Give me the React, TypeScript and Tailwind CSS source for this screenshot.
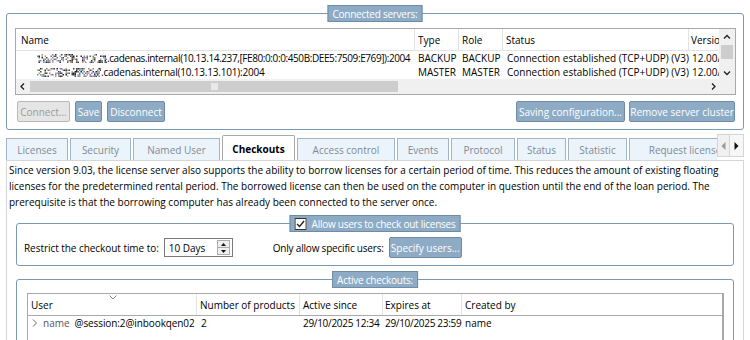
import React from "react";

function Noise({ w, seed }: { w: number; seed: number }) {
  let s = seed;
  const rnd = () => {
    s = (s * 1103515245 + 12345) & 0x7fffffff;
    return s / 0x7fffffff;
  };
  const colors = ["#333", "#555", "#777", "#999", "#c070a0", "#60a060", "#6080d0", "#444", "#aaa", "#d09050", "#222"];
  const rects: React.ReactNode[] = [];
  for (let x = 0; x < w; x += 1.5) {
    for (let y = 2; y < 11; y += 1.5) {
      if (rnd() < 0.45) {
        rects.push(<rect key={x + "-" + y} x={x} y={y} width={1.5} height={1.5} fill={colors[Math.floor(rnd() * colors.length)]} />);
      }
    }
  }
  return (
    <svg width={w} height={12} className="shrink-0">
      {rects}
    </svg>
  );
}

function Btn({ children, disabled, className = "" }: { children: React.ReactNode; disabled?: boolean; className?: string }) {
  return (
    <div
      className={
        "h-[21px] flex items-center justify-center rounded-[2px] border px-[3px] whitespace-nowrap " +
        (disabled
          ? "bg-[#e5e5e5] border-[#b8b8b8] text-[#9a9a9a] "
          : "bg-[#8eabc6] border-[#6f8ca7] text-white ") +
        className
      }
    >
      {children}
    </div>
  );
}

function Group({ title, className = "", children }: { title: React.ReactNode; className?: string; children: React.ReactNode }) {
  return (
    <div className={"relative border border-[#7c99b3] rounded-[3px] " + className}>
      <div className="absolute left-1/2 -translate-x-1/2 -top-[9px] h-[17px] flex items-center bg-[#8eabc6] border border-[#6f8ca7] text-white px-[4px] whitespace-nowrap tracking-[-0.25px]">
        {title}
      </div>
      {children}
    </div>
  );
}

function Tab({ label, w, active }: { label: string; w: number; active?: boolean }) {
  if (active) {
    return (
      <div
        className="h-[26px] shrink-0 flex items-center justify-center bg-white border border-b-0 border-[#a8a8a8] rounded-t-[2px] font-bold text-black -mb-px relative z-10"
        style={{ width: w }}
      >
        {label}
      </div>
    );
  }
  return (
    <div
      className="h-[22px] shrink-0 flex items-center justify-center bg-[#ecf4fb] border border-b-0 border-[#9fb4c6] text-[#7d8a96] whitespace-nowrap overflow-hidden"
      style={{ width: w }}
    >
      {label}
    </div>
  );
}

export default function App() {
  return (
    <div className="w-[750px] h-[340px] bg-white overflow-hidden text-[10px] leading-[14px] text-black font-['Open_Sans',sans-serif] pt-[13px]">
      {/* Connected servers */}
      <Group title="Connected servers:" className="ml-[6px] w-[738px] h-[117px] pt-[14px] pl-[8px]">
        <div className="w-[721px] h-[67px] border border-[#a9a9a9] bg-white relative overflow-hidden">
          <div className="flex h-[22px] border-b border-[#e3e3e3] items-center">
            <div className="w-[399px] pl-[5px] border-r border-[#e3e3e3] h-full flex items-center">Name</div>
            <div className="w-[44px] pl-[3px] border-r border-[#e3e3e3] h-full flex items-center">Type</div>
            <div className="w-[44px] pl-[3px] border-r border-[#e3e3e3] h-full flex items-center">Role</div>
            <div className="w-[186px] pl-[3px] border-r border-[#e3e3e3] h-full flex items-center">Status</div>
            <div className="w-[32px] pl-[2px] h-full flex items-center overflow-hidden whitespace-nowrap">Version</div>
          </div>
          <div className="flex h-[14px] items-center whitespace-nowrap">
            <div className="w-[399px] pl-[21px] flex items-center overflow-hidden">
              <Noise w={70} seed={7} />
              <span className="tracking-[-0.4px]">.cadenas.internal(10.13.14.237,[FE80:0:0:0:450B:DEE5:7509:E769]):2004</span>
            </div>
            <div className="w-[44px] pl-[3px]">BACKUP</div>
            <div className="w-[44px] pl-[3px]">BACKUP</div>
            <div className="w-[186px] pl-[4px]">Connection established (TCP+UDP) (V3)</div>
            <div className="w-[32px] pl-[3px] overflow-hidden">12.00/</div>
          </div>
          <div className="flex h-[14px] items-center whitespace-nowrap">
            <div className="w-[399px] pl-[21px] flex items-center overflow-hidden">
              <Noise w={64} seed={91} />
              <span className="tracking-[-0.2px]">.cadenas.internal(10.13.13.101):2004</span>
            </div>
            <div className="w-[44px] pl-[3px]">MASTER</div>
            <div className="w-[44px] pl-[3px]">MASTER</div>
            <div className="w-[186px] pl-[4px]">Connection established (TCP+UDP) (V3)</div>
            <div className="w-[32px] pl-[3px] overflow-hidden">12.00/</div>
          </div>
          {/* vertical scrollbar */}
          <div className="absolute right-0 top-0 w-[16px] h-[51px] bg-[#f0f0f0] flex flex-col items-center">
            <svg width="16" height="16" viewBox="0 0 16 16"><path d="M5 9.5 L8 6.5 L11 9.5" stroke="#222" strokeWidth="1.3" fill="none" /></svg>
            <div className="w-[12px] h-[14px] bg-[#cdcdcd]" />
            <div className="flex-1" />
            <svg width="16" height="14" viewBox="0 0 16 14"><path d="M5 5.5 L8 8.5 L11 5.5" stroke="#222" strokeWidth="1.3" fill="none" /></svg>
          </div>
          {/* horizontal scrollbar */}
          <div className="absolute left-0 bottom-0 w-[704px] h-[15px] bg-[#f0f0f0] flex items-center">
            <svg width="14" height="15" viewBox="0 0 14 15"><path d="M8 4.5 L5 7.5 L8 10.5" stroke="#222" strokeWidth="1.3" fill="none" /></svg>
            <div className="w-[368px] h-[11px] bg-[#cdcdcd] flex items-center justify-center">
              <div className="w-[7px] h-[7px] bg-[#e8e8e8]" />
            </div>
            <div className="flex-1" />
            <svg width="14" height="15" viewBox="0 0 14 15"><path d="M6 4.5 L9 7.5 L6 10.5" stroke="#222" strokeWidth="1.3" fill="none" /></svg>
          </div>
          <div className="absolute right-0 bottom-0 w-[16px] h-[15px] bg-[#f0f0f0]" />
        </div>
        <div className="flex mt-[6px] pl-[2px] pr-[8px]">
          <Btn disabled className="w-[53px]">Connect...</Btn>
          <Btn className="w-[27px] ml-[5px]">Save</Btn>
          <Btn className="w-[58px] ml-[5px]">Disconnect</Btn>
          <div className="flex-1" />
          <Btn className="w-[109px]">Saving configuration...</Btn>
          <Btn className="w-[106px] ml-[4px]">Remove server cluster</Btn>
        </div>
      </Group>

      {/* Tabs */}
      <div className="flex items-end mt-[4px] ml-[6px] h-[26px]">
        <div className="flex items-end gap-[2px] w-[711px] overflow-hidden h-[26px]">
          <Tab label="Licenses" w={62} />
          <Tab label="Security" w={61} />
          <Tab label="Named User" w={87} />
          <Tab label="Checkouts" w={73} active />
          <Tab label="Access control" w={98} />
          <Tab label="Events" w={52} />
          <Tab label="Protocol" w={64} />
          <Tab label="Status" w={49} />
          <Tab label="Statistic" w={59} />
          <Tab label="Request license" w={112} />
        </div>
        <div className="flex self-start h-[23px]">
          <div className="w-[13px] h-[23px] bg-[#f0f0f0] border border-[#d5d5d5] flex items-center justify-center">
            <svg width="5" height="8" viewBox="0 0 5 8"><path d="M4.5 0 L0.5 4 L4.5 8 Z" fill="#9a9a9a" /></svg>
          </div>
          <div className="w-[14px] h-[23px] bg-[#f7f7f7] border border-l-0 border-[#d5d5d5] flex items-center justify-center">
            <svg width="5" height="8" viewBox="0 0 5 8"><path d="M0.5 0 L4.5 4 L0.5 8 Z" fill="#111" /></svg>
          </div>
        </div>
      </div>

      {/* Pane */}
      <div className="ml-[6px] w-[738px] h-[200px] border border-[#d6d6d6] bg-white px-[9px] pt-[1px]">
        <p className="leading-[16px] -ml-[7px] whitespace-nowrap text-black">
          Since version 9.03, the license server also supports the ability to borrow licenses for a certain period of time. This reduces the amount of existing floating
          <br />
          licenses for the predetermined rental period. The borrowed license can then be used on the computer in question until the end of the loan period. The
          <br />
          prerequisite is that the borrowing computer has already been connected to the server once.
        </p>

        <Group
          className="mt-[13px] h-[43px] flex items-center pl-[7px]"
          title={
            <div className="flex items-center gap-[5px]">
              <div className="w-[12px] h-[12px] bg-white border border-[#333] flex items-center justify-center">
                <svg width="10" height="10" viewBox="0 0 10 10"><path d="M1.5 5 L4 7.5 L8.5 2" stroke="#222" strokeWidth="1.4" fill="none" /></svg>
              </div>
              <span>Allow users to check out licenses</span>
            </div>
          }
        >
          <div className="flex items-center mt-[6px]">
            <span className="whitespace-nowrap tracking-[-0.05px]">Restrict the checkout time to:</span>
            <div className="ml-[5px] w-[69px] h-[19px] border border-[#7a7a7a] bg-white flex items-center">
              <span className="pl-[4px] flex-1">10 Days</span>
              <div className="w-[13px] h-[15px] mr-[2px] border border-[#adadad] bg-[#efefef] flex flex-col">
                <div className="flex-1 flex items-center justify-center border-b border-[#adadad]">
                  <svg width="5" height="3" viewBox="0 0 5 3"><path d="M0 3 L2.5 0 L5 3 Z" fill="#111" /></svg>
                </div>
                <div className="flex-1 flex items-center justify-center">
                  <svg width="5" height="3" viewBox="0 0 5 3"><path d="M0 0 L2.5 3 L5 0 Z" fill="#111" /></svg>
                </div>
              </div>
            </div>
            <span className="ml-[40px] whitespace-nowrap tracking-[-0.2px]">Only allow specific users:</span>
            <Btn className="ml-[5px] w-[73px]">Specify users...</Btn>
          </div>
        </Group>

        <Group className="mt-[13px] h-[80px] pt-[13px] pl-[10px]" title="Active checkouts:">
          <div className="w-[697px] h-[60px] border border-[#a9a9a9] border-r-[2px] bg-white relative">
            <div className="flex h-[22px] border-b border-[#a9a9a9] items-center relative">
              <div className="w-[169px] pl-[3px] border-r border-[#e3e3e3] h-full flex items-center">User</div>
              <div className="w-[103px] pl-[3px] border-r border-[#e3e3e3] h-full flex items-center whitespace-nowrap">Number of products</div>
              <div className="w-[83px] pl-[3px] border-r border-[#e3e3e3] h-full flex items-center whitespace-nowrap">Active since</div>
              <div className="w-[79px] pl-[2px] border-r border-[#e3e3e3] h-full flex items-center whitespace-nowrap">Expires at</div>
              <div className="flex-1 pl-[3px] h-full flex items-center whitespace-nowrap">Created by</div>
              <svg className="absolute left-[81px] top-[1px]" width="8" height="5" viewBox="0 0 8 5"><path d="M0.5 0.5 L4 4 L7.5 0.5" stroke="#8a8a8a" strokeWidth="1" fill="none" /></svg>
            </div>
            <div className="flex h-[14px] items-center whitespace-nowrap">
              <div className="w-[169px] pl-[4px] flex items-center">
                <svg width="6" height="8" viewBox="0 0 6 8"><path d="M1 0.5 L4.5 4 L1 7.5" stroke="#666" strokeWidth="1" fill="none" /></svg>
                <span className="ml-[5px] text-[#555]">name</span>
                <span className="ml-[5px] tracking-[-0.1px]">@session:2@inbookqen02</span>
              </div>
              <div className="w-[103px] pl-[4px]">2</div>
              <div className="w-[83px] pl-[3px] tracking-[-0.3px]">29/10/2025 12:34</div>
              <div className="w-[79px] pl-[2px] tracking-[-0.3px]">29/10/2025 23:59</div>
              <div className="flex-1 pl-[3px]">name</div>
            </div>
          </div>
        </Group>
      </div>
    </div>
  );
}
